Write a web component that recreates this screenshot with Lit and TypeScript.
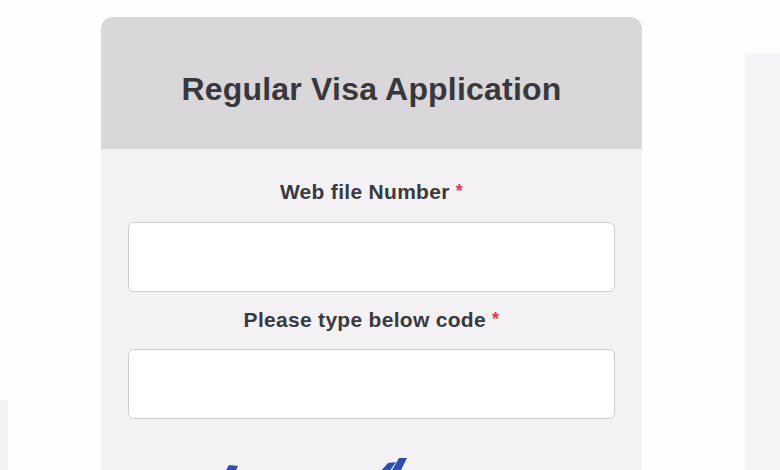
import { LitElement, html, css } from "lit";
import { customElement } from "lit/decorators.js";

@customElement("app-root")
export class AppRoot extends LitElement {
  static styles = css`
    :host {
      display: block;
      width: 780px;
      height: 470px;
      overflow: hidden;
      background: #fefefe;
      font-family: "Liberation Sans", Arial, sans-serif;
    }
    .page {
      display: flex;
      height: 470px;
      overflow: hidden;
    }
    .left {
      width: 8px;
      flex: none;
      margin-top: 400px;
      background: #f3f1f4;
    }
    .card {
      width: 541px;
      flex: none;
      margin: 17px 0 0 93px;
      background: #f3f1f4;
      border-radius: 12px 12px 0 0;
      height: 600px;
    }
    .right {
      width: 35px;
      flex: none;
      margin: 53px 0 0 103px;
      background: #f4f3f5;
      height: 500px;
    }
    .head {
      box-sizing: border-box;
      height: 132px;
      padding-top: 12px;
      background: #d9d7da;
      border-radius: 12px 12px 0 0;
      display: flex;
      align-items: center;
      justify-content: center;
    }
    h1 {
      margin: 0;
      font-size: 32px;
      font-weight: 700;
      color: #38373b;
      letter-spacing: 0.2px;
    }
    .body {
      padding: 30px 27px 0;
      display: flex;
      flex-direction: column;
    }
    .field {
      display: flex;
      flex-direction: column;
      align-items: stretch;
      margin-bottom: 15px;
    }
    label {
      text-align: center;
      font-size: 21px;
      line-height: 26px;
      font-weight: 700;
      color: #3a393d;
      letter-spacing: 0.3px;
      margin-bottom: 16px;
    }
    .field:first-child label {
      margin-bottom: 17px;
    }
    .req {
      color: #e0384f;
      font-size: 18px;
      font-weight: 700;
      line-height: 0;
      vertical-align: 2px;
    }
    input {
      box-sizing: border-box;
      height: 70px;
      border: 1px solid #cfcdd0;
      border-radius: 6px;
      background: #fff;
      outline: none;
      padding: 0 12px;
    }
    .captcha {
      display: block;
      filter: blur(0.6px);
    }
  `;

  render() {
    return html`
      <div class="page">
        <div class="left"></div>
        <div class="card">
          <div class="head"><h1>Regular Visa Application</h1></div>
          <div class="body">
            <div class="field">
              <label>Web file Number <span class="req">*</span></label>
              <input type="text" />
            </div>
            <div class="field">
              <label>Please type below code <span class="req">*</span></label>
              <input type="text" />
            </div>
            <svg class="captcha" width="487" height="60" viewBox="0 0 487 60">
              <path d="M97 38 L101 31 L110 32 L107 38 Z" fill="#2a4fb0" />
              <path d="M252 38 L260 29 L268 28 L261 38 Z" fill="#2a4fb0" />
              <path d="M263 38 L271 24 L279 24 L272 38 Z" fill="#2a4fb0" />
            </svg>
          </div>
        </div>
        <div class="right"></div>
      </div>
    `;
  }
}
